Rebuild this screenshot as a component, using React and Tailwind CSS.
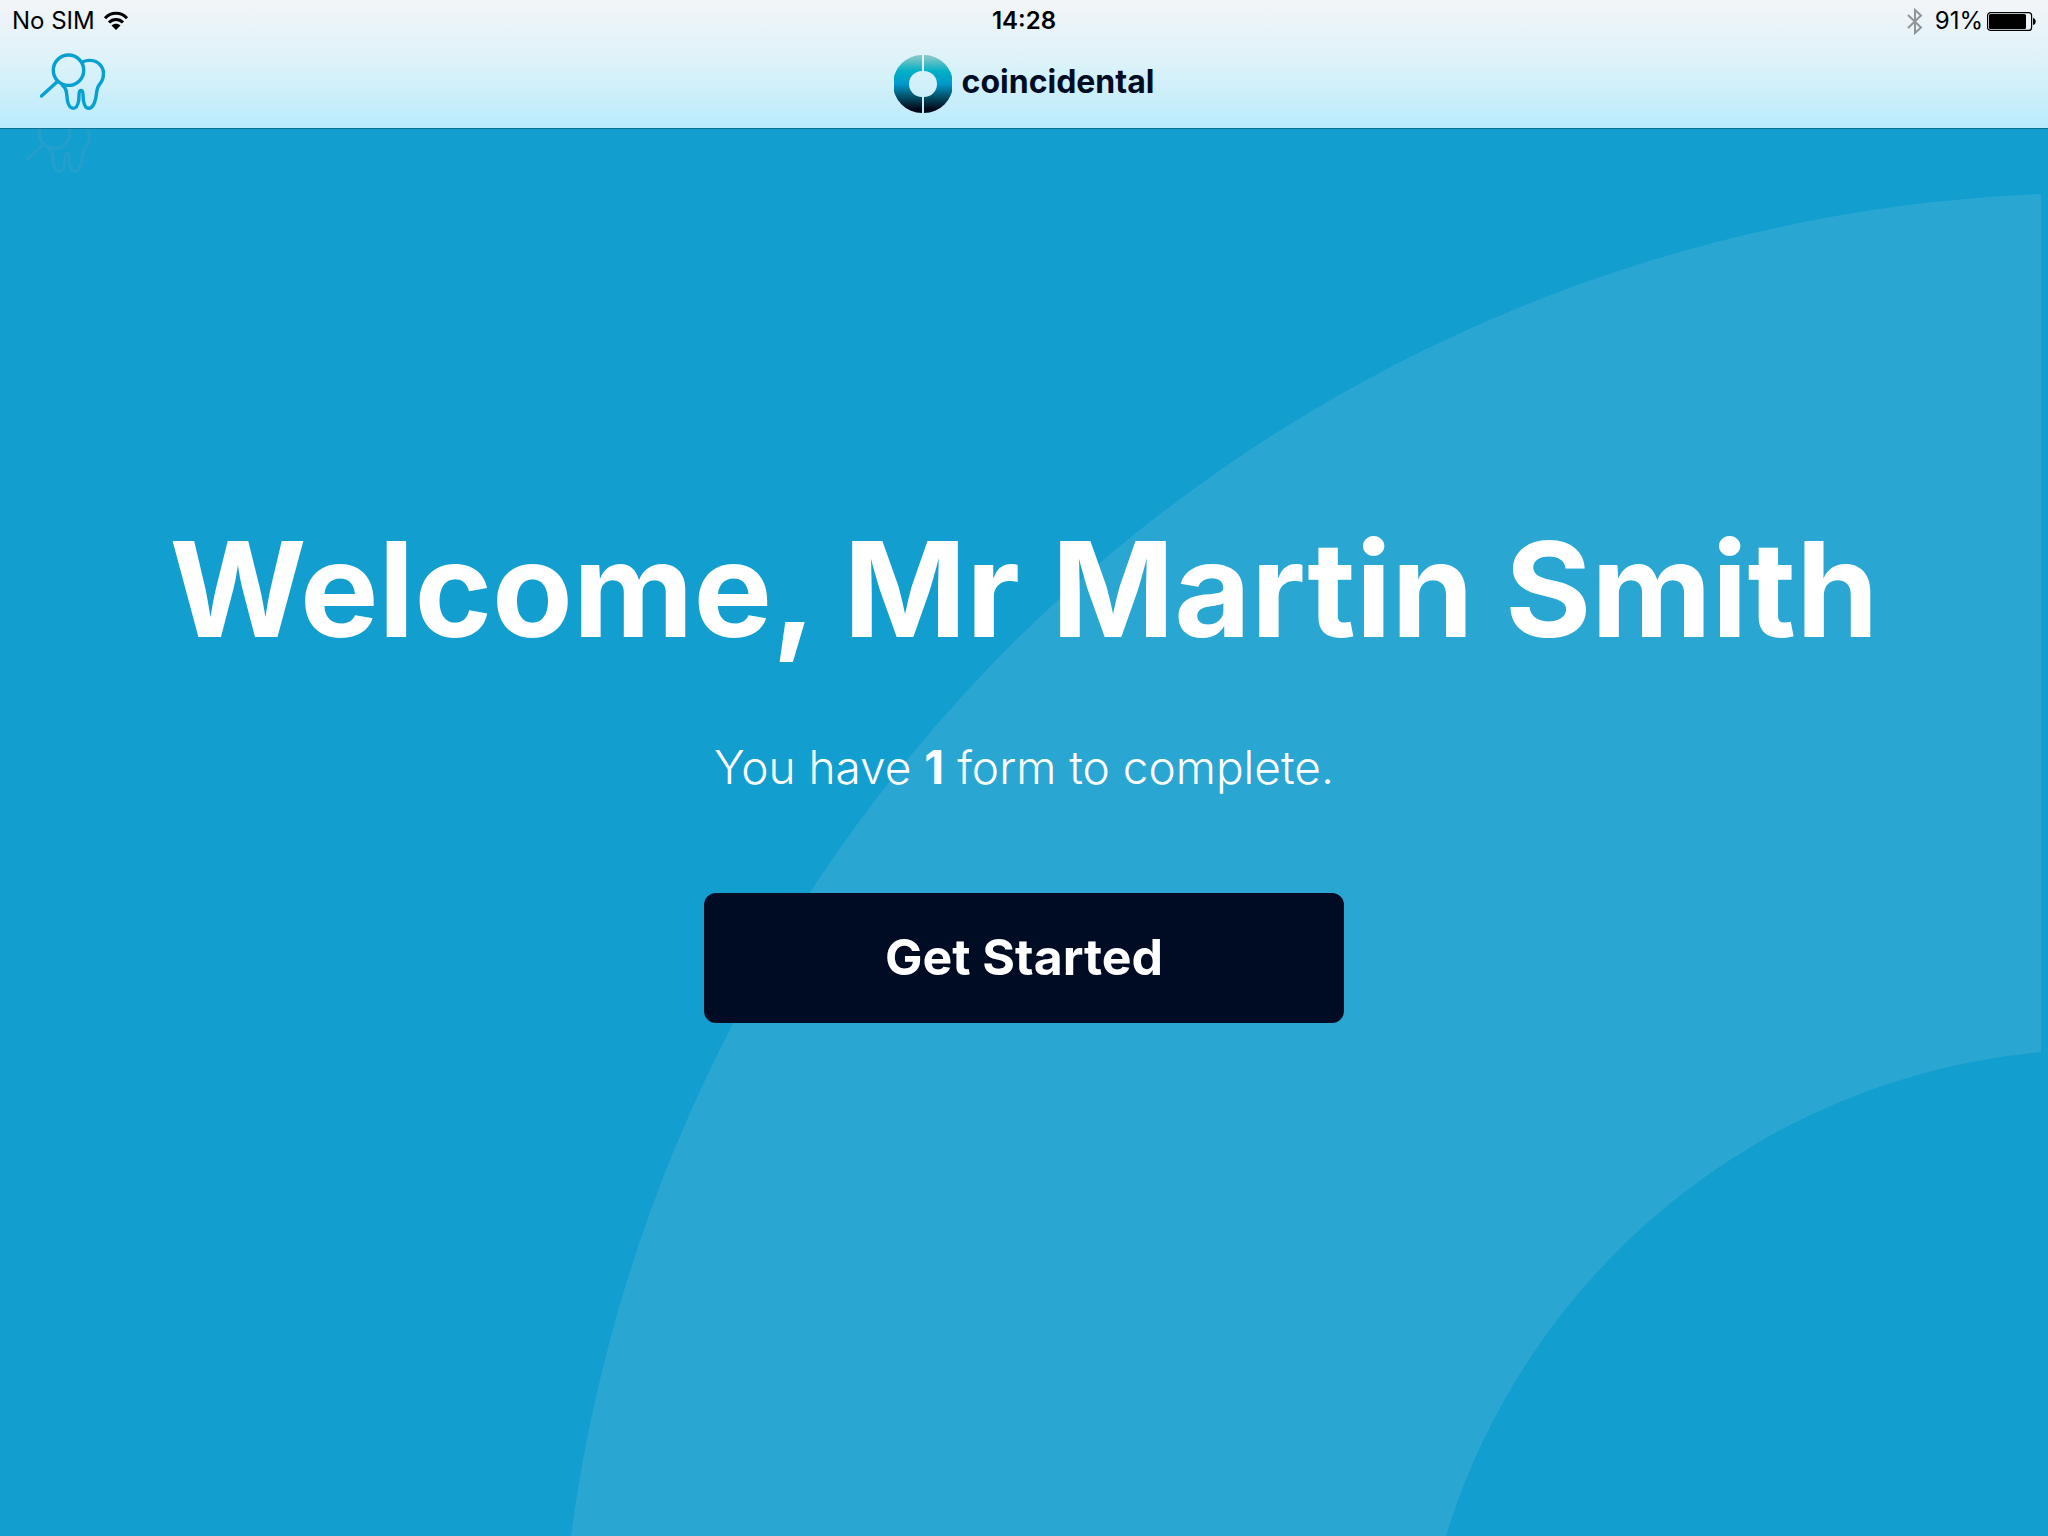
import React from 'react';

const patient = {
  title: "Mr",
  name: "Martin Smith",
  forms: 1,
};

const ToothIcon = ({ className }) => (
  <svg
    className={className}
    viewBox="38 50 70 62"
    fill="none"
    stroke="currentColor"
    strokeWidth="3.4"
    strokeLinecap="round"
    strokeLinejoin="round"
    aria-hidden="true"
  >
    <circle cx="68.5" cy="70.2" r="15.2" />
    <path d="M57.5 81.5 41.5 96" />
    <path d="M82.5 62C85.5 60.6 88 60.2 90.5 60.4 98 60.8 103.5 66.5 103.5 73.5 103.5 78.5 102 81.5 99.5 84.5 95.5 89 97.5 95 94.5 102.5 93 106.5 91 108.3 88.7 108.3 86 108.3 84.3 105.5 83.5 101 82.7 97 83.8 90.5 81 90.5 78.2 90.5 79.5 97 78.5 101.5 77.6 105.8 76 108.3 73.3 108.3 70.5 108.3 68.5 105.5 67.5 101 66.5 96 67.5 88 62.5 85.5" />
  </svg>
);

const WifiIcon = () => (
  <svg className="w-[26px] h-5" viewBox="0 0 26 20" fill="none" stroke="#000" strokeWidth="3" aria-hidden="true">
    <path d="M2 7.2C8 0.700 18 0.700 24 7.200" />
    <path d="M6 11.500C10 7.500 16 7.500 20 11.500" />
    <path d="M8.500 14.500C11 12 15 12 17.500 14.500L13 19Z" fill="#000" stroke="none" />
  </svg>
);

const BluetoothIcon = () => (
  <svg className="w-4 h-[27px]" viewBox="0 0 16 27" fill="none" stroke="#8f9498" strokeWidth="2" aria-hidden="true">
    <path d="M1 7 14 19.5 8 25V2L14 7.5 1 20" />
  </svg>
);

const BatteryIcon = () => (
  <svg className="w-[49px] h-[19px]" viewBox="0 0 49 19" aria-hidden="true">
    <rect x="0.6" y="0.6" width="44" height="17.8" rx="3" fill="none" stroke="#000" strokeWidth="1.2" />
    <rect x="2" y="2" width="37" height="15" rx="1.5" fill="#000" />
    <path d="M46 6C48 6.5 48.7 8 48.7 9.5S48 12.5 46 13Z" fill="#000" />
  </svg>
);

const LogoMark = () => (
  <svg className="w-[58px] h-[58px]" viewBox="0 0 58 58" aria-hidden="true">
    <defs>
      <linearGradient id="ring" x1="0" y1="0" x2="0" y2="58" gradientUnits="userSpaceOnUse">
        <stop offset="0.05" stopColor="#7cc6c6" />
        <stop offset="0.28" stopColor="#00b0c6" />
        <stop offset="0.5" stopColor="#0099cb" />
        <stop offset="0.72" stopColor="#045069" />
        <stop offset="0.93" stopColor="#000a1c" />
      </linearGradient>
    </defs>
    <path fill="url(#ring)" d="M28 0A29 29 0 0 0 28 58V42A13 13 0 0 1 28 16Z" />
    <path fill="url(#ring)" d="M30 0A29 29 0 0 1 30 58V42A13 13 0 0 0 30 16Z" />
  </svg>
);

const StatusBar = () => (
  <div className="grid grid-cols-3 items-center h-10 px-3 pt-0.5 text-2xl text-black">
    <div className="flex items-center gap-2">
      <span>No SIM</span>
      <WifiIcon />
    </div>
    <div className="text-center font-semibold">14:28</div>
    <div className="flex items-center justify-end">
      <BluetoothIcon />
      <span className="ml-3 mr-1">91%</span>
      <BatteryIcon />
    </div>
  </div>
);

const App = () => {
  return (
    <div className="flex flex-col min-h-screen bg-[#129ecf] font-['Inter',sans-serif]">
      {/* Header */}
      <header className="border-b border-[#0b6f92] bg-linear-to-b from-[#f3f5f8] via-[#dcf2f9] to-[#b9ebfc]">
        <StatusBar />
        <div className="grid grid-cols-3 items-center h-22 px-[38px]">
          <button type="button" aria-label="Examination" className="justify-self-start mb-1.5 text-[#06a0d2]">
            <ToothIcon className="w-[70px] h-[62px]" />
          </button>
          <div className="flex items-center justify-self-center gap-[10px]">
            <LogoMark />
            <span className="pb-1 text-[32px] leading-10 font-bold text-[#000b24]">coincidental</span>
          </div>
        </div>
      </header>

      {/* Welcome */}
      <main className="relative flex flex-1 flex-col items-center justify-center overflow-hidden px-8 pb-[118px] text-white">
        <svg
          className="absolute inset-0 w-full h-full"
          viewBox="0 0 2048 1407"
          preserveAspectRatio="xMaxYMax slice"
          aria-hidden="true"
        >
          <path d="M2041 65A1546 1546 0 0 0 571 1407H1446A689 689 0 0 1 2041 923Z" fill="#2aa6d3" />
        </svg>
        <ToothIcon className="absolute left-6 -top-4 w-[70px] h-[62px] text-[#229fcc]" />

        <h1 className="relative text-center text-[132px] leading-[128px] font-bold">
          Welcome, {patient.title} {patient.name}
        </h1>
        <p className="relative mt-[88px] text-center text-[46px] leading-[52px] font-light">
          You have <strong className="font-bold">{patient.forms}</strong> form to complete.
        </p>
        <button
          type="button"
          className="relative mt-[100px] w-full max-w-[640px] h-[130px] rounded-xl bg-[#000b24] text-[50px] font-bold"
        >
          Get Started
        </button>
      </main>
    </div>
  );
};

export default App;
